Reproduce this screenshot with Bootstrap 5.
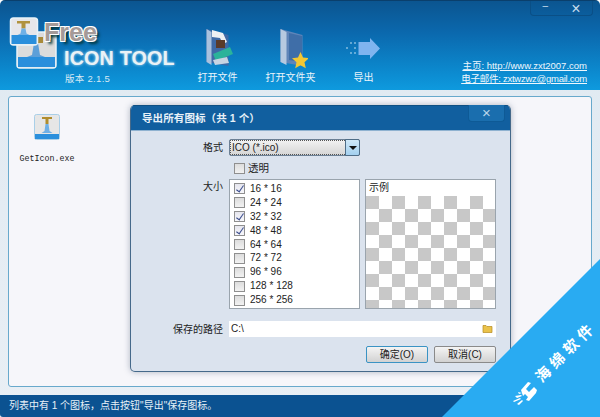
<!DOCTYPE html>
<html lang="zh-CN">
<head>
<meta charset="UTF-8" />
<title>Free ICON TOOL</title>
<link href="https://cdn.jsdelivr.net/npm/bootstrap@5.3.0/dist/css/bootstrap.min.css" rel="stylesheet" />
<style>
    html, body { margin: 0; background: #fff; }
    body { font-family: "Liberation Sans", "Noto Sans CJK SC", sans-serif; font-size: 10px; color: #222; }
    .app-win { width: 600px; height: 417px; position: relative; overflow: hidden; background: linear-gradient(#dfe9f1, #e9eff5); border-radius: 5px 5px 0 0; }

    /* header */
    .app-head { height: 90px; position: relative; background: linear-gradient(#0b5590 0, #0b68ad 35%, #0c8ed3 85%, #0e9ade 100%); color: #fff; border-top: 1px solid #0a3f6c; }
    .logo-area { width: 181px; flex: none; position: relative; height: 89px; }
    .logo-svg { position: absolute; left: 9px; top: 16px; }
    .logo-free { position: absolute; left: 44px; top: 17px; font: bold 25px/28px "Liberation Sans", sans-serif; color: #a49a98; text-shadow: 1px 1px 0 #fff, -1px -1px 0 #fff, 1px -1px 0 #fff, -1px 1px 0 #fff, 3px 3px 3px #033; }
    .logo-name { position: absolute; left: 64px; top: 46px; font: bold 19.7px/22px "Liberation Sans", sans-serif; color: #eaf2f6; white-space: nowrap; text-shadow: 0 0 3px #bfe0f2; letter-spacing: .2px; }
    .logo-ver { position: absolute; left: 65px; top: 71px; font-size: 9.5px; line-height: 13px; color: #d6e9f5; letter-spacing: .3px; }
    .tool-btn { width: 73px; height: 89px; padding-top: 27px; font-size: 10px; line-height: 15px; color: #eaf4fb; }
    .tool-btn svg { height: 42px; display: block; }
    .tool-links { position: absolute; right: 13px; top: 58px; font-size: 9.5px; line-height: 13px; text-align: right; }
    .tool-links a { color: #eef7fd; display: block; }
    .links-tight { letter-spacing: -.25px; }
    .sys-btns { position: absolute; right: 7px; top: 0; width: 63px; height: 15px; border: 1px solid #0a4f86; border-top: 0; border-radius: 0 0 4px 4px; }
    .sys-btns span { color: #c7dded; }

    /* list panel */
    .list-panel { position: absolute; left: 8px; top: 96px; right: 8px; height: 291px; background: #f6f6fa; border: 1px solid #68a9cc; border-radius: 3px; }
    .file-item { width: 76px; padding-top: 17px; font: 8.3px/12px "Liberation Mono", "Noto Sans CJK SC", monospace; color: #222; }
    .file-name { margin-top: 13px; }

    /* status bar */
    .app-status { position: absolute; left: 0; right: 0; bottom: 0; height: 22px; background: #0b5291; color: #e8f1f8; font-size: 10px; line-height: 22px; padding-left: 9px; border-radius: 0 0 3px 3px; }

    /* dialog */
    .dlg { position: absolute; left: 130px; top: 105px; width: 381px; height: 267px; background: #dbe3ee; border: 1px solid #45698a; border-top: 0; border-radius: 5px; overflow: hidden; box-shadow: 0 0 6px rgba(40,60,90,.35); }
    .dlg-title { height: 26px; background: #115f9f; color: #e8f1f8; font-size: 10.5px; font-weight: 600; line-height: 25px; padding-left: 11px; border-top: 1px solid #0e4f83; border-bottom: 1px solid #8fb2d0; letter-spacing: .1px; }
    .dlg-close { position: absolute; right: 5px; top: 0; width: 37px; height: 17px; background: #1a6eae; border: 1px solid #0e5a96; border-top: 0; border-radius: 0 0 4px 4px; text-align: center; color: #b9d5ea; font-size: 15px; line-height: 15px; font-weight: 400; }
    .dlg-body { padding: 8px 14px 0 0; }
    .dlg-label { width: 94px; text-align: right; font-size: 10px; line-height: 15px; color: #222; flex: none; padding-right: 2px; }
    .combo { width: 131px; height: 17px; border: 1px solid #6c8095; border-radius: 2px; margin-left: 4px; background: linear-gradient(#f2f2f2, #d5d5d5); font-size: 10px; line-height: 15px; padding-left: 2px; position: relative; outline: 1px dotted #555; outline-offset: -2px; }
    .combo-arrow { position: absolute; right: -1px; top: -1px; width: 15px; height: 17px; background: linear-gradient(#cfe8f8, #a3d0ef); border: 1px solid #4f6d87; border-radius: 0 2px 2px 0; }
    .combo-arrow::after { content: ""; position: absolute; left: 3px; top: 6px; border: 4px solid transparent; border-top: 4px solid #111; border-bottom: 0; }
    .chk { width: 11px; height: 11px; border: 1px solid #8f8f8f; background: linear-gradient(#dcdcdc, #f2f2f2); flex: none; position: relative; display: inline-block; }
    .chk-on { background: linear-gradient(#e6e6ee, #f7f7fb); }
    .chk-on::after { content: ""; position: absolute; left: 3px; top: 0; width: 4px; height: 8px; border: solid #3d4f8e; border-width: 0 1.5px 1.5px 0; transform: rotate(35deg); }
    .alpha-row { margin-left: 103px; margin-top: 6px; height: 13px; gap: 3px; font-size: 10.5px; line-height: 13px; }
    .size-wrap { margin-top: 4px; }
    .size-box { width: 131px; height: 130px; margin-left: 4px; background: #fff; border: 1px solid #9aa4ad; padding: 2px 0 0 4px; }
    .size-row { height: 13.9px; font-size: 10px; line-height: 14px; gap: 5px; }
    .sample-box { width: 131px; height: 130px; margin-left: 5px; background: #fff; border: 1px solid #9aa4ad; font-size: 10px; overflow: hidden; }
    .sample-cap { height: 15px; line-height: 14px; padding-left: 3px; margin-top: 1px; }
    .sample-grid { height: 112px; background-image: conic-gradient(#fff 25%, #c8c8c8 0 50%, #fff 0 75%, #c8c8c8 0); background-size: 26px 26px; }
    .path-row { margin-top: 12px; }
    .path-box { width: 267px; height: 16px; margin-left: 4px; background: #fff; font-size: 10px; line-height: 15px; padding-left: 2px; position: relative; }
    .path-icon { position: absolute; right: 3px; top: 3px; }
    .btn-row { margin-top: 9px; gap: 6px; }
    .dlg-btn { width: 62px; height: 17px; padding: 0; font-size: 10px; line-height: 14px; color: #222; background: linear-gradient(#f4f4f4, #d2d2d2); border: 1px solid #8a8a8a; border-radius: 2px; }
    .dlg-btn-main { border-color: #3a93c4; }

    /* corner watermark */
    .wm-tri { position: absolute; right: 0; bottom: 0; width: 158px; height: 158px; background: #29abf2; clip-path: polygon(100% 0, 100% 100%, 0 100%); }
    .wm-text { position: absolute; left: 566px; top: 352px; color: #fff; font-size: 15px; line-height: 18px; font-weight: 700; white-space: nowrap; transform: translate(-50%, -50%) rotate(-45deg); letter-spacing: 4.6px; }
    .wm-logo { position: absolute; left: 512px; top: 380px; }
</style>
</head>
<body>
<div class="app-win">
    <!-- Header -->
    <div class="app-head d-flex">
        <div class="logo-area">
            <svg class="logo-svg" width="50" height="54" viewBox="0 0 50 54">
                <rect x="8" y="15" width="39" height="36" rx="3" fill="#dcdcdc" stroke="#e8f2f8" stroke-width="1.500"/>
                <rect x="9" y="40" width="37" height="10" fill="#2a8fdc"/>
                <path d="M18 40h18l-5-2-2-12h-4l-2 12z" fill="#5d9fd8"/>
                <path d="M22 20h12v6h-12z" fill="#a88a3a"/>
                <rect x="1.500" y="1" width="27" height="27" rx="3" fill="#e6e6ea" stroke="#e8f2f8" stroke-width="1.500"/>
                <rect x="2.500" y="18" width="25" height="9" fill="#2a8fdc"/>
                <path d="M8 4h13v2.500h-4.500v5h-4v-5H8z" fill="#b0923e"/>
                <path d="M12.500 11.500h4l1 5 3 1.500H8.500l3-1.500z" fill="#6fb0e6"/>
            </svg>
            <div class="logo-free">Free</div>
            <div class="logo-name">ICON TOOL</div>
            <div class="logo-ver">版本 2.1.5</div>
        </div>
        <div class="tool-btn d-flex flex-column align-items-center">
            <svg width="34" height="42" viewBox="0 0 34 42">
                <path d="M5.500 1l22 6v31l-22-4z" fill="#3f6aa6"/>
                <path d="M5.500 1l5 3v33l-5-3z" fill="#a9c1de"/>
                <path d="M11 2l11 3 4 9-4 2-3-6-8-1z" fill="#eef0f3"/>
                <rect x="15" y="12" width="9" height="8" fill="#5a3b2a"/>
                <path d="M12 26l17-7 3 7-17 7z" fill="#2bb39a"/>
                <path d="M12 32l14-3 2 6-14 2z" fill="#c8d4e2"/>
            </svg>
            <span>打开文件</span>
        </div>
        <div class="tool-btn d-flex flex-column align-items-center">
            <svg width="34" height="42" viewBox="0 0 34 42">
                <path d="M6.500 1l22 6v31l-22-4z" fill="#5f85b9"/>
                <path d="M6.500 1l6 3v33l-6-3z" fill="#b6c9e0"/>
                <path d="M15 5l13 3v26l-13-2z" fill="#3f6ea8"/>
                <path d="M26.500 24l2.500 5.500 6 .7-4.500 4 1.300 6-5.300-3-5.300 3 1.300-6-4.500-4 6-.7z" fill="#f2c833"/>
            </svg>
            <span>打开文件夹</span>
        </div>
        <div class="tool-btn d-flex flex-column align-items-center">
            <svg width="36" height="42" viewBox="0 0 36 42">
                <g fill="#d6ecfa"><circle cx="1" cy="20" r=".8"/><circle cx="5" cy="15" r=".8"/><circle cx="9" cy="15" r=".8"/><circle cx="5" cy="25" r=".8"/><circle cx="9" cy="25" r=".8"/><circle cx="9" cy="20" r=".8"/></g>
                <path d="M12.500 14H24v-4l10 10.500L24 31v-4H12.500z" fill="#7fb4ef"/>
            </svg>
            <span>导出</span>
        </div>
        <div class="tool-links">
            <a href="#">主页: http://www.zxt2007.com</a>
            <a href="#" class="links-tight">电子邮件: zxtwzwz@gmail.com</a>
        </div>
        <div class="sys-btns d-flex">
            <span class="flex-fill text-center lh-1">–</span>
            <span class="flex-fill text-center lh-1 fs-6">×</span>
        </div>
    </div>

    <!-- File list -->
    <div class="list-panel">
        <div class="file-item d-flex flex-column align-items-center">
            <svg width="26" height="26" viewBox="0 0 26 26">
                <rect x=".5" y=".5" width="25" height="25" rx="2" fill="#e6e6e6" stroke="#a9cfe8"/>
                <rect x="1" y="20" width="24" height="5" fill="#2a8fdc"/>
                <path d="M8 3h10v2h-3.500v5h-3V5H8z" fill="#b08d2e"/>
                <path d="M11.500 10h3l1 7 3 2H7.500l3-2z" fill="#6fb0e6"/>
            </svg>
            <div class="file-name">GetIcon.exe</div>
        </div>
    </div>

    <!-- Status bar -->
    <div class="app-status">列表中有 1 个图标，点击按钮"导出"保存图标。</div>

    <!-- Export dialog -->
    <div class="dlg">
        <div class="dlg-title">导出所有图标（共 1 个）</div>
        <div class="dlg-close">×</div>
        <div class="dlg-body">
            <div class="d-flex align-items-center">
                <div class="dlg-label">格式</div>
                <div class="combo">ICO (*.ico)<span class="combo-arrow"></span></div>
            </div>
            <div class="d-flex align-items-center alpha-row">
                <span class="chk"></span><span>透明</span>
            </div>
            <div class="d-flex size-wrap">
                <div class="dlg-label">大小</div>
                <div class="size-box" id="sizeList"></div>
                <div class="sample-box">
                    <div class="sample-cap">示例</div>
                    <div class="sample-grid"></div>
                </div>
            </div>
            <div class="d-flex align-items-center path-row">
                <div class="dlg-label">保存的路径</div>
                <div class="path-box">C:\
                    <svg class="path-icon" width="11" height="9" viewBox="0 0 11 9"><path d="M1 1.500h3l1 1h5v6H1z" fill="#eac24a" stroke="#b58a20" stroke-width=".7"/></svg>
                </div>
            </div>
            <div class="d-flex justify-content-end btn-row">
                <button class="btn dlg-btn dlg-btn-main">确定(O)</button>
                <button class="btn dlg-btn">取消(C)</button>
            </div>
        </div>
    </div>

    <!-- Corner watermark -->
    <div class="wm-tri"></div>
    <div class="wm-text">海绵软件</div>
    <svg class="wm-logo" width="26" height="26" viewBox="0 0 26 26">
        <g fill="#fff">
            <path d="M9 10l7-8 3 1-5 6 3 3 5-5 3 3-1 3-7 8-3-1 2-3-3-3-2 2z"/>
            <path d="M6 12l4 1-3 1zM3 16l6-1 1 1-5 2zM1 21l7-3 1 1-7 3zM5 24l5-4 1 1-4 4z"/>
        </g>
    </svg>
</div>

<script>
    // Fill the size list
    const sizes = [[16, true], [24, false], [32, true], [48, true], [64, false], [72, false], [96, false], [128, false], [256, false]];
    const sizeList = document.getElementById("sizeList");
    sizes.forEach(([s, on]) => {
        const row = document.createElement("div");
        row.className = "size-row d-flex align-items-center";
        row.innerHTML = `<span class="chk ${on ? "chk-on" : ""}"></span><span>${s} * ${s}</span>`;
        sizeList.appendChild(row);
    });
</script>
<script src="https://cdn.jsdelivr.net/npm/bootstrap@5.3.0/dist/js/bootstrap.bundle.min.js"></script>
</body>
</html>
